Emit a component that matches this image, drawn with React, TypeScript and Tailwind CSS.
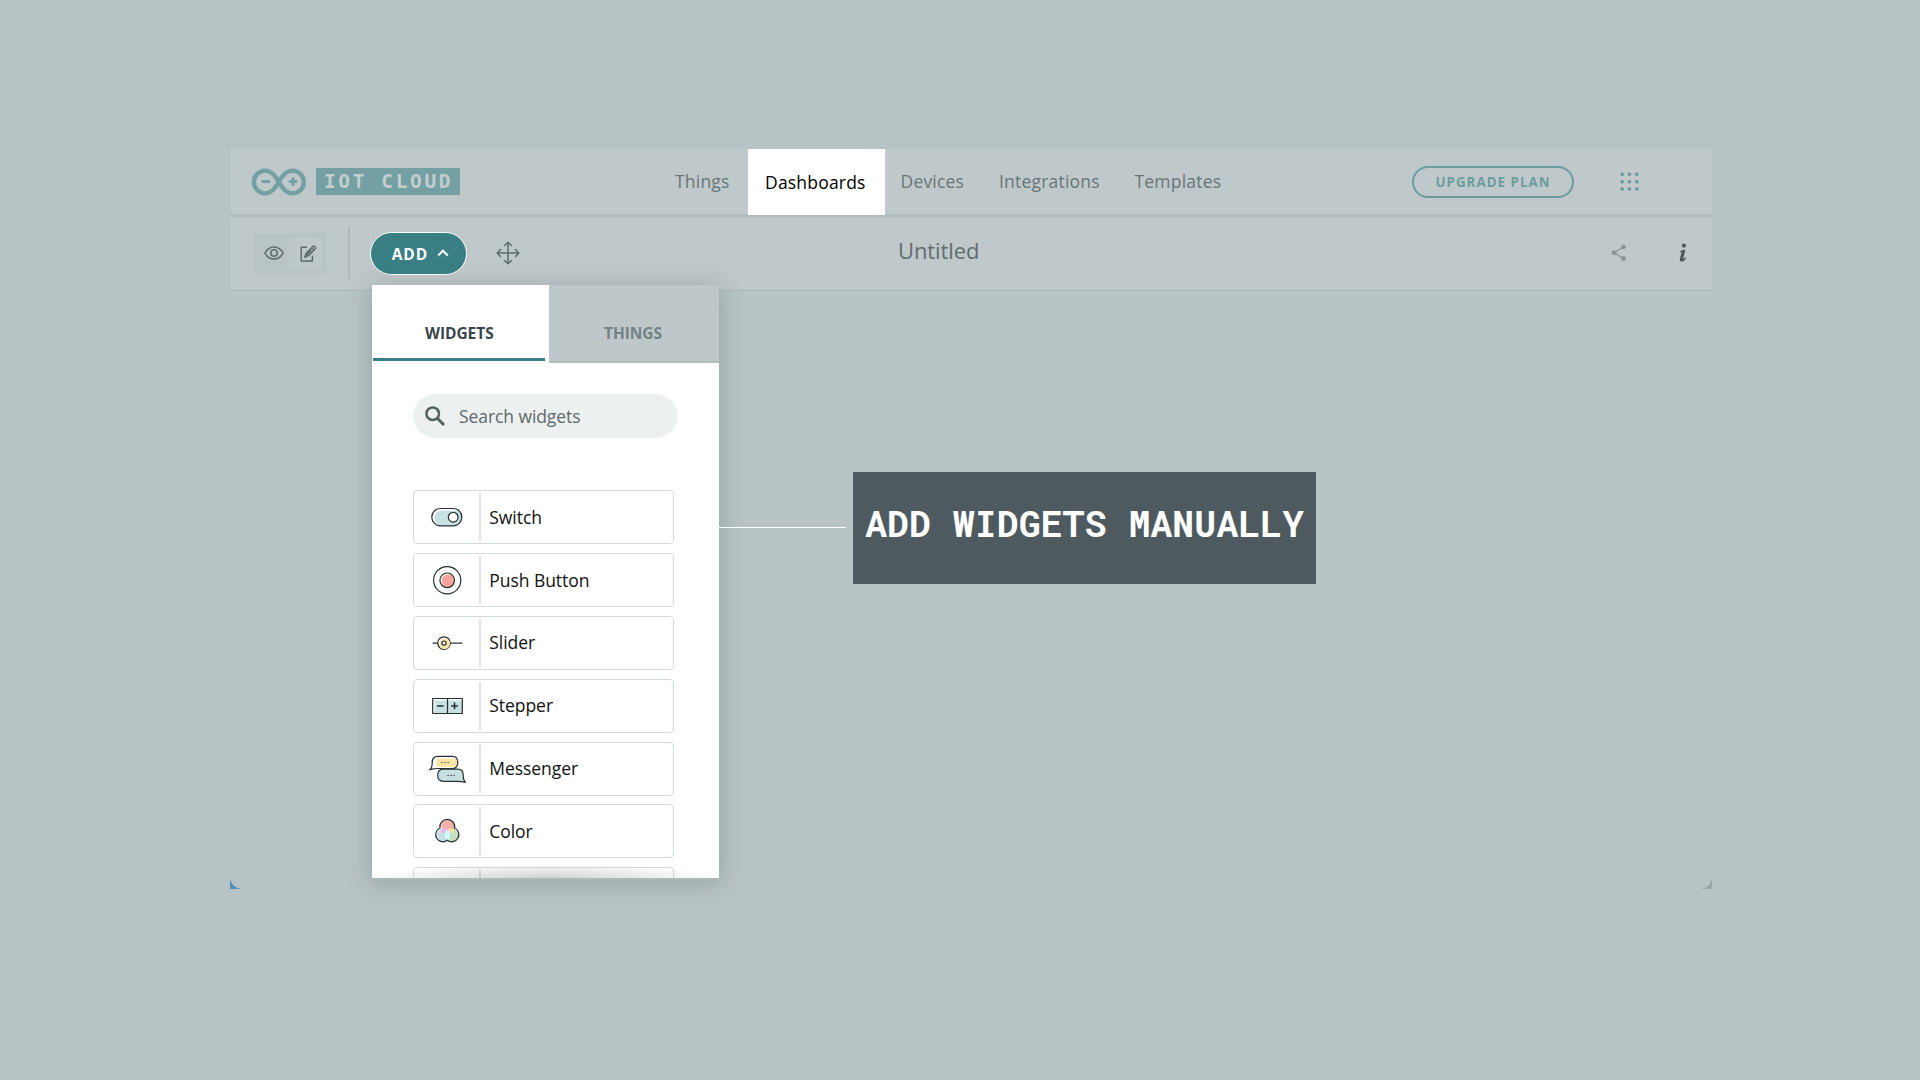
import React from "react";

const INK = "#252e30";

function ArduinoMark() {
  return (
    <svg width="56" height="28" viewBox="0 0 56 28" fill="none" stroke="#74a0a3">
      <path
        d="M27.800 14C24.600 8 20.600 2.600 14.300 2.600a11.400 11.400 0 0 0 0 22.800C20.600 25.400 24.600 20 27.800 14C31 8 35 2.600 41.400 2.600a11.400 11.400 0 0 1 0 22.800C35 25.400 31 20 27.800 14Z"
        strokeWidth="4.400"
      />
      <path d="M10.500 13.600h8.600M37.800 13.600h8.400M42 9.400v8.400" strokeWidth="3" />
    </svg>
  );
}

function EyeIcon() {
  return (
    <svg width="20" height="14" viewBox="0 0 20 14" fill="none" stroke="#5d6c6e" strokeWidth="1.500">
      <path d="M.9 7C3 3 6.200.9 10 .9S17 3 19.100 7C17 11 13.800 13.100 10 13.100S3 11 .9 7Z" />
      <circle cx="10" cy="7" r="3.200" />
    </svg>
  );
}

function EditIcon() {
  return (
    <svg width="17" height="17" viewBox="0 0 17 17" fill="none" stroke="#5a696b" strokeWidth="1.400">
      <path d="M7 2.200H1.200V16H12.400V10.500" />
      <path d="M4.800 12l1.300-3.500L13 1.300a.8.8 0 0 1 1.100 0l1.300 1.300a.8.8 0 0 1 0 1.100L8.400 10.700ZM11.600 2.800l2.400 2.400M6.500 10.300l5-5" />
    </svg>
  );
}

function MoveIcon() {
  return (
    <svg width="24" height="24" viewBox="0 0 24 24" fill="none" stroke="#5d6c6e" strokeWidth="1.500" strokeLinecap="round" strokeLinejoin="round">
      <path d="M12 1.500v21M1.500 12h21M8.500 4.500L12 1.200l3.500 3.300M8.500 19.500L12 22.800l3.500-3.300M4.500 8.500L1.200 12l3.300 3.500M19.500 8.500l3.300 3.500-3.300 3.500" />
    </svg>
  );
}

function GridDots() {
  return (
    <svg width="20" height="20" viewBox="0 0 20 20" fill="#629a9d">
      {[2.2, 9.7, 17].map((y) =>
        [2.2, 9.4, 16.8].map((x) => <circle key={`${x}-${y}`} cx={x} cy={y} r="1.8" />)
      )}
    </svg>
  );
}

function ShareIcon() {
  return (
    <svg width="16" height="18" viewBox="0 0 16 18" fill="#8b9597" stroke="#8b9597">
      <path d="M12.500 3L3 8.700L12.500 14.500" fill="none" strokeWidth="1.300" />
      <circle cx="12.500" cy="3" r="1.900" />
      <circle cx="3" cy="8.700" r="1.900" />
      <circle cx="12.500" cy="14.500" r="1.900" />
    </svg>
  );
}

function InfoIcon() {
  return (
    <svg width="8" height="20" viewBox="0 0 8 20" fill="#4e595b">
      <circle cx="4.900" cy="2.600" r="2.100" />
      <path d="M1 8.800C2.200 7.300 3.800 6.500 6.400 6.700L4.300 15.300C4.100 16.300 5.200 15.700 6.600 14.200L7.300 14.900C5.800 17.400 3.600 18.900 2.100 18.500C.8 18.200.6 17 .9 15.800L2.400 9.700C2.500 9.200 2 9.200 1.300 9.600Z" />
    </svg>
  );
}

function SearchIcon() {
  return (
    <svg width="20" height="20" viewBox="0 0 20 20" fill="none" stroke="#52605f" strokeWidth="2.500">
      <circle cx="7.700" cy="7.700" r="6.300" />
      <path d="M12.300 12.300L19 19" strokeWidth="3" />
    </svg>
  );
}

function SwitchIcon() {
  return (
    <svg width="38" height="32" viewBox="0 0 38 32" fill="none" stroke={INK} strokeWidth="1.200">
      <rect x="6.500" y="9.500" width="27" height="15" rx="7.500" fill="#c7e1e3" stroke="none" />
      <rect x="3.800" y="7.500" width="30" height="17.400" rx="8.700" />
      <circle cx="25.200" cy="16.200" r="4.900" fill="#fff" />
    </svg>
  );
}

function PushIcon() {
  return (
    <svg width="38" height="32" viewBox="0 0 38 32" fill="none" stroke={INK} strokeWidth="1.200">
      <circle cx="19.200" cy="16.300" r="13.600" />
      <circle cx="20.200" cy="17" r="6.600" fill="#f4a59c" stroke="none" />
      <circle cx="19.200" cy="16.300" r="7.300" />
    </svg>
  );
}

function SliderIcon() {
  return (
    <svg width="38" height="32" viewBox="0 0 38 32" fill="none" stroke={INK} strokeWidth="1.200">
      <path d="M4.500 16.100H34.500" />
      <circle cx="16" cy="16.100" r="6.300" fill="#fff" />
      <circle cx="16.700" cy="16.700" r="5.200" fill="#fce5a6" stroke="none" />
      <circle cx="16" cy="16.100" r="2.100" fill="#fff" />
    </svg>
  );
}

function StepperIcon() {
  return (
    <svg width="38" height="32" viewBox="0 0 38 32" fill="none" stroke={INK} strokeWidth="1.200">
      <path d="M6.500 10.500H34V23H6.500Z" fill="#c7e1e3" stroke="none" />
      <path d="M4.700 8.500H34.300V23.500H4.700ZM19.500 8.500v15" />
      <path d="M9 15.900h6.500M23.200 15.900h6.600M26.500 12.600v6.600" strokeWidth="1.500" />
    </svg>
  );
}

function MessengerIcon() {
  return (
    <svg width="38" height="32" viewBox="0 0 38 32" fill="none" stroke={INK} strokeWidth="1.200">
      <path d="M9 5.500H29V14H8Z" fill="#fce5a6" stroke="none" />
      <path d="M10 3.300H24.500C28.300 3.300 29.800 5.500 29.800 9.200S28.300 15.500 24.500 15.500H9C6.700 15.500 5 16 2 16.500C4 14.800 4.200 13 4.200 9.400S6 3.300 10 3.300Z" />
      <path d="M15.500 16.200H29.500C33.700 16.200 35.200 18.200 35.200 22C35.200 25.500 35.500 27.500 37.500 29.200C34.500 28.700 33 28.400 30 28.400H15.500C11.500 28.400 9.700 26 9.700 22.300S11.500 16.200 15.500 16.200Z" fill="#c7e1e3" />
      <path d="M13.500 9.500h8M19.500 22.300h7.500" strokeWidth="1.200" strokeDasharray="1.200 1.800" />
    </svg>
  );
}

function ColorIcon() {
  return (
    <svg width="38" height="32" viewBox="0 0 38 32" fill="none" stroke={INK} strokeWidth="1.200">
      <g stroke="none">
        <circle cx="20" cy="11.300" r="6.600" fill="#f6b0aa" />
        <circle cx="15.500" cy="20" r="6.500" fill="#c7dfe2" />
        <circle cx="24" cy="20" r="6.500" fill="#c6e0c1" />
        <ellipse cx="16.300" cy="15.600" rx="3" ry="2.300" fill="#efb5ea" transform="rotate(-25 16.300 15.600)" />
        <ellipse cx="22.800" cy="15.600" rx="3" ry="2.200" fill="#fbdca0" transform="rotate(25 22.800 15.600)" />
        <ellipse cx="19.500" cy="20" rx="2.700" ry="4.800" fill="#cdf8f8" />
      </g>
      <path d="M12 13A7.400 7.400 0 1 1 26.600 13A7.200 7.200 0 1 1 19.300 25.300A7.200 7.200 0 1 1 12 13Z" />
    </svg>
  );
}

const widgets = [
  { name: "Switch", Icon: SwitchIcon },
  { name: "Push Button", Icon: PushIcon },
  { name: "Slider", Icon: SliderIcon },
  { name: "Stepper", Icon: StepperIcon },
  { name: "Messenger", Icon: MessengerIcon },
  { name: "Color", Icon: ColorIcon },
];

function Header() {
  return (
    <header className="flex h-[68px] border-b-[3px] border-[#b1bcbd]">
      <div className="flex w-[440px] items-center pl-[21px]">
        <ArduinoMark />
        <div className="ml-[9px] flex h-[27px] w-[144px] items-center bg-[#74a0a3] pt-px pl-[8px] font-['DejaVu_Sans_Mono'] text-[19.500px] leading-none font-bold tracking-[2.600px] text-[#c3cecf]">
          <span className="whitespace-pre">IOT CLOUD</span>
        </div>
      </div>
      <nav className="flex items-center text-[17.500px] tracking-[0.200px] text-[#687678]">
        <a className="w-[78px] pl-[5px]">Things</a>
        <a className="flex h-[66px] w-[137px] items-center self-start bg-white pl-[17px] text-black">
          Dashboards
        </a>
        <a className="w-[114px] pl-[15.500px]">Devices</a>
        <a className="w-[135.500px]">Integrations</a>
        <a>Templates</a>
      </nav>
      <div className="ml-auto flex items-center pr-[72px]">
        <div className="flex h-8 w-[162px] items-center justify-center rounded-full border-2 border-[#6d9ca0] pt-[2px] text-[13.300px] font-bold tracking-[1.050px] text-[#6d9ca0]">
          UPGRADE PLAN
        </div>
        <div className="ml-[46px]">
          <GridDots />
        </div>
      </div>
    </header>
  );
}

function Toolbar() {
  return (
    <div className="flex h-[73.500px] items-center border-b border-[#a9b5b6]">
      <div className="ml-[23px] flex h-[41px] w-[73px] items-center rounded-[3px] bg-[#b8c4c5] pl-[11px]">
        <EyeIcon />
        <div className="ml-[5px] flex h-[32px] w-[33px] items-center rounded-[3px] bg-[#bfc9cb] pl-[11px]">
          <EditIcon />
        </div>
      </div>
      <div className="ml-[22px] h-[52px] w-[2px] bg-[#aeb9ba]" />
      <button className="ml-[20px] flex h-[43px] w-[97px] items-center rounded-full border-[1.500px] border-white bg-[#397f83] pl-[20.500px] text-[15.500px] font-bold tracking-[1px] text-white">
        <span className="w-[37px] pt-[2px]">ADD</span>
        <svg className="ml-[8px]" width="12" height="8" viewBox="0 0 12 8" fill="none" stroke="#fff" strokeWidth="2">
          <path d="M1.200 6.500L6 1.700L10.800 6.500" />
        </svg>
      </button>
      <div className="ml-[29px]">
        <MoveIcon />
      </div>
      <h1 className="-mt-[5px] ml-[378px] text-[22px] tracking-[-0.100px] text-[#5f6d6f]">Untitled</h1>
      <div className="ml-auto flex items-center pr-[25.500px]">
        <ShareIcon />
        <div className="ml-[51.500px]">
          <InfoIcon />
        </div>
      </div>
    </div>
  );
}

function WidgetPanel() {
  return (
    <section className="absolute top-[136px] left-[142px] flex h-[595px] w-[347px] flex-col overflow-visible border-b-2 border-[#acb7b8] shadow-[0_2px_22px_rgba(70,90,90,0.3)]">
      <div className="flex h-[78px] shrink-0 bg-white text-[15.500px] font-bold tracking-[-0.050px]">
        <div className="flex w-[177px] flex-col">
          <div className="flex h-[73px] items-center pt-[25px] pl-[53px] text-[#3a474a]">WIDGETS</div>
          <div className="ml-px h-[3px] w-[172px] bg-[#397f83]" />
        </div>
        <div className="flex h-[78px] flex-1 items-center border-b-2 border-[#b0bcbd] bg-[#bec8ca] pt-[22px] pl-[55px] text-[#748284]">
          THINGS
        </div>
      </div>
      <div className="relative flex min-h-0 flex-1 flex-col overflow-hidden bg-white px-[41px]">
        <div className="mt-[31px] flex h-[44px] w-[265px] shrink-0 items-center rounded-full bg-[#ecf0f1] pl-[12px] text-[17.500px] tracking-[-0.080px] text-[#5d6a6c]">
          <SearchIcon />
          <span className="ml-[14px]">Search widgets</span>
        </div>
        <div className="mt-[52px] flex w-[260.500px] flex-col gap-[8.900px]">
          {widgets.map(({ name, Icon }) => (
            <div key={name} className="flex h-[54px] shrink-0 items-center rounded-[4px] border border-[#d3dbdc] text-[17.500px] tracking-[-0.050px] text-[#111]">
              <div className="flex h-[48px] w-[67px] items-center border-r-2 border-[#dfe5e5] pl-[13.500px]">
                <Icon />
              </div>
              <span className="-mt-[0.500px] ml-[8.300px]">{name}</span>
            </div>
          ))}
          <div className="flex h-[54px] shrink-0 items-center rounded-[4px] border border-[#d3dbdc]">
            <div className="h-[48px] w-[67px] border-r-2 border-[#dfe5e5]" />
          </div>
        </div>
        <div className="absolute right-0 bottom-0 left-0 h-[14px] bg-[radial-gradient(ellipse_50%_100%_at_50%_100%,rgba(0,0,0,0.18),transparent)]" />
      </div>
    </section>
  );
}

export default function App() {
  return (
    <div className="h-[1080px] w-[1920px] overflow-hidden bg-[#b7c3c4] pt-[149px] pl-[230px] font-['Open_Sans','Noto_Sans',sans-serif]">
      <main className="relative h-[740px] w-[1482px]">
        <div className="bg-[#bfc8ca]">
          <Header />
          <Toolbar />
        </div>
        <WidgetPanel />
        <div className="absolute top-[323px] left-[489px] flex items-center">
          <div className="-mt-px h-px w-[127px] bg-white" />
          <div className="ml-[7px] flex h-[112px] w-[463px] items-center justify-center bg-[#4e5a60] pb-[9px] font-['Roboto_Mono','DejaVu_Sans_Mono','monospace'] text-[36.600px] leading-none font-bold whitespace-pre text-white">
            ADD WIDGETS MANUALLY
          </div>
        </div>
        <svg className="absolute bottom-0 left-0" width="12" height="12" viewBox="0 0 12 12">
          <path d="M0 1C1 7 4 10.500 11 12H0Z" fill="#4d8db5" />
        </svg>
        <svg className="absolute right-0 bottom-0" width="12" height="12" viewBox="0 0 12 12">
          <path d="M12 1C11 7 8 10.500 1 12H10C11.500 12 12 11 12 10Z" fill="#98a6a8" />
        </svg>
      </main>
    </div>
  );
}
